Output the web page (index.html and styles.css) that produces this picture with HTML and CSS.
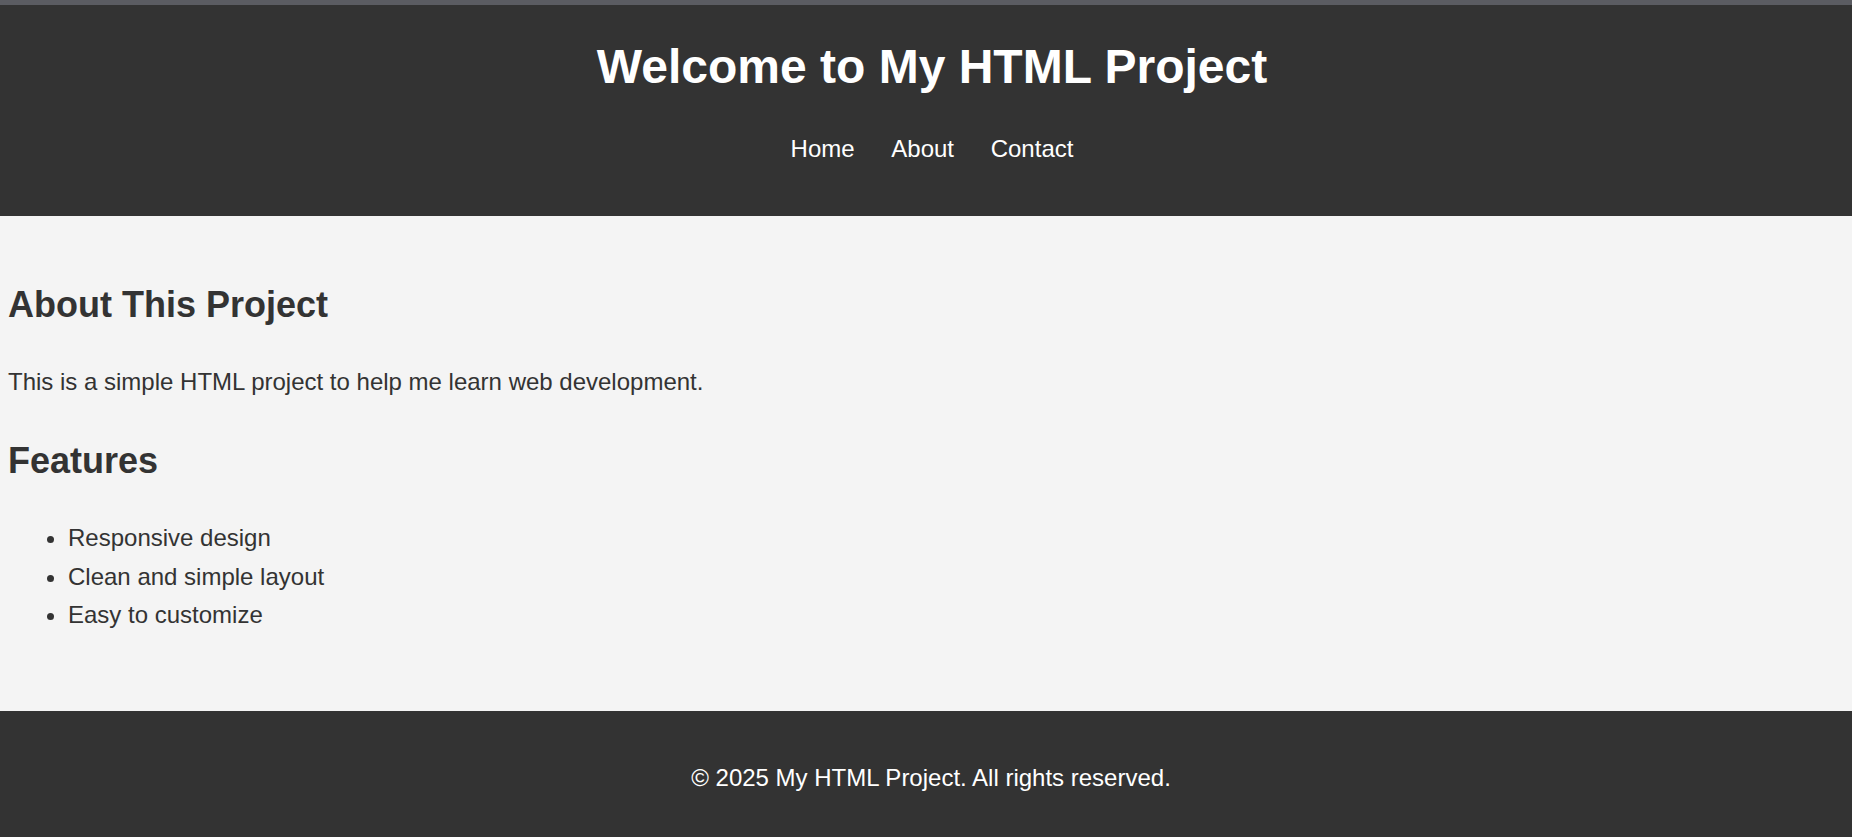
FILE: index.html
```html
<!DOCTYPE html>
<html lang="en">
<head>
<meta charset="utf-8">
<title>My HTML Project</title>
<link rel="stylesheet" href="styles.css">
</head>
<body>
<div class="topbar"></div>
<header class="site-header">
  <h1 class="site-title">Welcome to My HTML Project</h1>
  <nav class="site-nav">
    <a href="#">Home</a>
    <a href="#">About</a>
    <a href="#">Contact</a>
  </nav>
</header>
<main class="content">
  <h2 class="section-title">About This Project</h2>
  <p class="text">This is a simple HTML project to help me learn web development.</p>
  <h2 class="section-title">Features</h2>
  <ul class="features">
    <li>Responsive design</li>
    <li>Clean and simple layout</li>
    <li>Easy to customize</li>
  </ul>
</main>
<footer class="site-footer">
  <p class="copyright">&copy; 2025 My HTML Project. All rights reserved.</p>
</footer>
</body>
</html>
```
FILE: styles.css
```css
html, body {
  margin: 0;
  padding: 0;
}
body {
  font-family: "Liberation Sans", Arial, sans-serif;
  font-size: 24px;
  line-height: 1.6;
  color: #333;
  background: #f4f4f4;
}
.topbar {
  height: 5px;
  background: #5b5c62;
}
.site-header {
  background: #333;
  color: #fff;
  text-align: center;
  padding: 23.5px 0 23.5px 12px;
}
.site-title {
  margin: 0;
  font-size: 48px;
  font-weight: bold;
}
.site-nav {
  margin: 24.7px 0 24px;
}
.site-nav a {
  color: #fff;
  text-decoration: none;
  margin: 0 15px;
}
.content {
  padding: 30px 8px 52px;
}
.section-title {
  font-size: 36px;
  margin: 30px 0;
}
.text {
  margin: 24px 0;
}
.features {
  margin: 24px 0;
  padding-left: 60px;
}
.site-footer {
  background: #333;
  color: #fff;
  text-align: center;
  padding: 24.5px 0 22.5px 10px;
}
.copyright {
  margin: 24px 0;
}
```
